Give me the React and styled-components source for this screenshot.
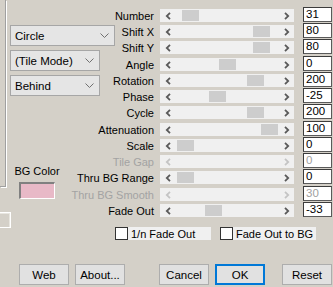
import React from "react";
import styled, { createGlobalStyle } from "styled-components";

const Global = createGlobalStyle`
  html, body { margin: 0; padding: 0; background: #d4d0c8; overflow: hidden; }
  * { box-sizing: border-box; }
`;

const Dialog = styled.div`
  width: 333px;
  height: 287px;
  background: #d4d0c8;
  font-family: "Liberation Sans", Arial, sans-serif;
  font-size: 11px;
  color: #000;
  display: flex;
  flex-direction: column;
`;

const Top = styled.div`
  display: flex;
  height: 219px;
`;

const Edge = styled.div`
  width: 10px;
  display: flex;
  flex-direction: column;
`;

const EdgeFrame = styled.div`
  width: 6px;
  height: 187px;
  flex: none;
  border-right: 1px solid #a0a0a0;
  border-bottom: 1px solid #a0a0a0;
  box-shadow: 1px 1px 0 #ffffff;
`;

const EdgeBox = styled.div`
  margin-top: 25px;
  width: 11px;
  height: 16px;
  flex: none;
  border: 1px solid #ffffff;
  border-left: none;
  box-shadow: inset -1px 1px 0 #e8e6e0;
`;

const Form = styled.div`
  padding-top: 7px;
  display: grid;
  grid-template-columns: 150px 134px 38px;
  grid-template-rows: 16px 16px 17px 16px 16px 16px 17px 16px 16px 16px 17px 16px 16px;
`;

const Side = styled.div`
  grid-column: 1;
  grid-row: 1 / 14;
  display: flex;
  flex-direction: column;
  align-items: flex-start;
  padding-top: 18px;
  gap: 4px;
`;

const Combo = styled.div`
  width: ${(p) => p.$w}px;
  height: 21px;
  background: #e5e5e5;
  border: 1px solid #a6a6a6;
  display: flex;
  align-items: center;
  justify-content: space-between;
  padding: 0 5px 0 4px;
  font-size: 11.5px;
`;

const BGBlock = styled.div`
  margin-top: 65px;
  margin-left: 6px;
  width: 42px;
  display: flex;
  flex-direction: column;
  align-items: center;
  gap: 4px;
`;

const BGLabel = styled.div`
  font-size: 11px;
  white-space: nowrap;
  line-height: 13px;
`;

const Swatch = styled.div`
  width: 36px;
  height: 17px;
  background: #e8b9c7;
  border-top: 2px solid #808080;
  border-left: 2px solid #808080;
  border-right: 1px solid #ffffff;
  border-bottom: 1px solid #ffffff;
`;

const Label = styled.div`
  grid-column: 1;
  grid-row: ${(p) => p.$row};
  justify-self: end;
  padding-right: 6px;
  padding-top: 2px;
  line-height: 14px;
  white-space: nowrap;
  color: ${(p) => (p.$disabled ? "#a3a3a3" : "#000")};
`;

const Scroll = styled.div`
  grid-column: 2;
  grid-row: ${(p) => p.$row};
  margin-top: 2px;
  height: 13px;
  background: #f0f0f0;
  display: flex;
`;

const Arrow = styled.div`
  width: 15px;
  display: flex;
  align-items: center;
  justify-content: center;
  color: ${(p) => (p.$disabled ? "#c4c4c4" : "#5a5a5a")};
`;

const Track = styled.div`
  position: relative;
  flex: 1;
`;

const Thumb = styled.div`
  position: absolute;
  top: 1px;
  bottom: 1px;
  width: 17px;
  left: ${(p) => p.$pos}px;
  background: #cdcdcd;
`;

const ValueBox = styled.div`
  grid-column: 3;
  grid-row: ${(p) => p.$row};
  justify-self: end;
  align-self: start;
  width: 29px;
  height: 15px;
  background: #fff;
  border: 1px solid #3c3c3c;
  border-right-color: #5a5a5a;
  border-bottom-color: #5a5a5a;
  padding-left: 2px;
  line-height: 13px;
  font-size: 11.5px;
  color: ${(p) => (p.$disabled ? "#a0a0a0" : "#000")};
`;

const CheckRow = styled.div`
  margin-top: 8px;
  padding-left: 115px;
  display: flex;
  gap: 9px;
`;

const CheckItem = styled.div`
  width: 96px;
  height: 13px;
  background: #f0f0f0;
  display: flex;
  align-items: center;
  gap: 3px;
  white-space: nowrap;
`;

const Box = styled.div`
  width: 13px;
  height: 13px;
  background: #fff;
  border: 1px solid #333;
  flex: none;
`;

const ButtonRow = styled.div`
  margin-top: 24px;
  padding-left: 19px;
  display: flex;
`;

const Button = styled.div`
  width: 50px;
  height: 21px;
  margin-left: ${(p) => p.$gap || 0}px;
  background: #e1e1e1;
  border: ${(p) => (p.$default ? "2px solid #0078d7" : "1px solid #adadad")};
  display: flex;
  align-items: center;
  justify-content: center;
  font-size: 11.5px;
`;

const LeftChevron = () => (
  <svg width="6" height="8" viewBox="0 0 6 8">
    <polyline points="5,0.8 1.8,4 5,7.2" fill="none" stroke="currentColor" strokeWidth="1.8" />
  </svg>
);

const RightChevron = () => (
  <svg width="6" height="8" viewBox="0 0 6 8">
    <polyline points="1,0.8 4.2,4 1,7.2" fill="none" stroke="currentColor" strokeWidth="1.8" />
  </svg>
);

const DownChevron = () => (
  <svg width="9" height="5" viewBox="0 0 9 5">
    <polyline points="0.5,0.5 4.5,4.5 8.5,0.5" fill="none" stroke="#707070" strokeWidth="1" />
  </svg>
);

const rows = [
  { label: "Number", value: "31", pos: 7 },
  { label: "Shift X", value: "80", pos: 78 },
  { label: "Shift Y", value: "80", pos: 78 },
  { label: "Angle", value: "0", pos: 44 },
  { label: "Rotation", value: "200", pos: 72 },
  { label: "Phase", value: "-25", pos: 34 },
  { label: "Cycle", value: "200", pos: 72 },
  { label: "Attenuation", value: "100", pos: 86 },
  { label: "Scale", value: "0", pos: 2 },
  { label: "Tile Gap", value: "0", disabled: true },
  { label: "Thru BG Range", value: "0", pos: 2 },
  { label: "Thru BG Smooth", value: "30", disabled: true },
  { label: "Fade Out", value: "-33", pos: 30 },
];

export default function App() {
  return (
    <>
      <Global />
      <Dialog>
        <Top>
          <Edge>
            <EdgeFrame />
            <EdgeBox />
          </Edge>
          <Form>
            <Side>
              <Combo $w={105}>
                <span>Circle</span>
                <DownChevron />
              </Combo>
              <Combo $w={90}>
                <span>(Tile Mode)</span>
                <DownChevron />
              </Combo>
              <Combo $w={90}>
                <span>Behind</span>
                <DownChevron />
              </Combo>
              <BGBlock>
                <BGLabel>BG Color</BGLabel>
                <Swatch />
              </BGBlock>
            </Side>
            {rows.map((r, i) => (
              <React.Fragment key={r.label}>
                <Label $row={i + 1} $disabled={r.disabled}>{r.label}</Label>
                <Scroll $row={i + 1}>
                  <Arrow $disabled={r.disabled}>
                    <LeftChevron />
                  </Arrow>
                  <Track>{!r.disabled && <Thumb $pos={r.pos} />}</Track>
                  <Arrow $disabled={r.disabled}>
                    <RightChevron />
                  </Arrow>
                </Scroll>
                <ValueBox $row={i + 1} $disabled={r.disabled}>{r.value}</ValueBox>
              </React.Fragment>
            ))}
          </Form>
        </Top>
        <CheckRow>
          <CheckItem>
            <Box />
            <span>1/n Fade Out</span>
          </CheckItem>
          <CheckItem>
            <Box />
            <span>Fade Out to BG</span>
          </CheckItem>
        </CheckRow>
        <ButtonRow>
          <Button>Web</Button>
          <Button $gap={6}>About...</Button>
          <Button $gap={34}>Cancel</Button>
          <Button $gap={6} $default>OK</Button>
          <Button $gap={17}>Reset</Button>
        </ButtonRow>
      </Dialog>
    </>
  );
}
